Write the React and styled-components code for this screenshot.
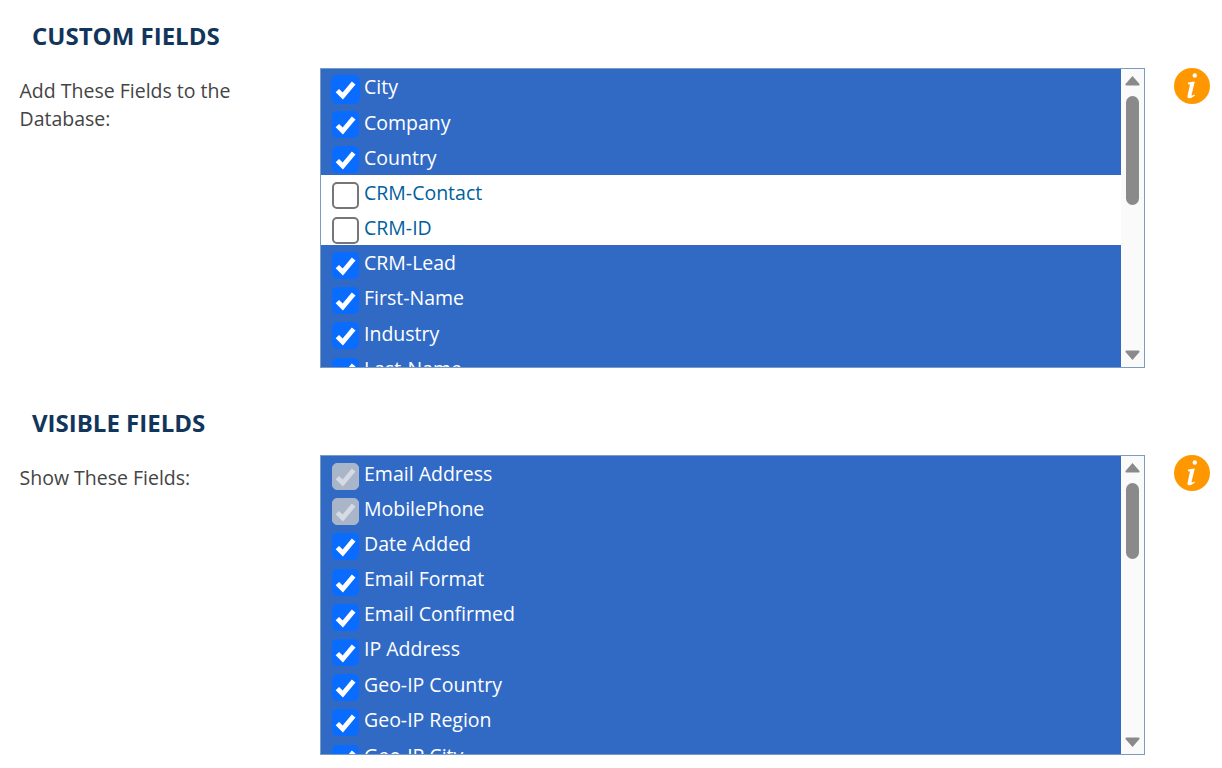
import React from 'react';
import styled, { createGlobalStyle } from 'styled-components';

const Global = createGlobalStyle`
  html, body { margin: 0; padding: 0; background: #fff; }
  body { font-family: "Open Sans", "Liberation Sans", sans-serif; overflow: hidden; }
`;
const Page = styled.div`
  width: 1222px;
  height: 768px;
  overflow: hidden;
  display: flex;
  flex-direction: column;
`;
const Section = styled.section`
  display: flex;
  flex-direction: column;
`;
const Title = styled.h2`
  margin: 0;
  height: ${p => p.$h}px;
  padding: ${p => p.$top}px 0 0 32px;
  box-sizing: border-box;
  font-size: 24px;
  line-height: 31px;
  font-weight: 700;
  color: #12355b;
`;
const Row = styled.div`
  display: flex;
  align-items: flex-start;
`;
const Label = styled.div`
  width: 320px;
  box-sizing: border-box;
  padding: 9px 60px 0 19.5px;
  font-size: 19.5px;
  line-height: 28px;
  color: #444;
`;
const ListBox = styled.div`
  width: 825px;
  height: 300px;
  box-sizing: border-box;
  border: 1px solid #7a9cc0;
  display: flex;
  background: #fff;
`;
const Items = styled.ul`
  flex: 1;
  margin: 0;
  padding: 0;
  list-style: none;
  overflow: hidden;
`;
const Item = styled.li`
  height: 35.2px;
  display: flex;
  align-items: flex-start;
  padding-left: 11px;
  background: ${p => (p.$on ? '#316ac5' : '#fff')};
  color: ${p => (p.$on ? '#fff' : '#005f9e')};
  font-size: 19.5px;
  line-height: 35px;
`;
const Box = styled.span`
  flex: none;
  width: 27px;
  height: 27px;
  margin-top: 7px;
  margin-right: 5px;
  box-sizing: border-box;
  border-radius: 5px;
  display: flex;
  align-items: center;
  justify-content: center;
  background: ${p => (p.$disabled ? '#a9b5c9' : p.$on ? '#0a6cff' : '#fff')};
  border: ${p => (p.$on ? 1 : 2)}px solid ${p => (p.$disabled ? '#a9b5c9' : p.$on ? '#0a6cff' : '#767676')};
  outline: ${p => (p.$focus ? '1px solid #0a6cff' : 'none')};
`;
const ItemText = styled.span`
  position: relative;
  top: ${p => p.$nudge}px;
`;
const Track = styled.div`
  flex: none;
  width: 23px;
  background: #fafafa;
  display: flex;
  flex-direction: column;
  align-items: center;
`;
const Arrow = styled.svg`
  flex: none;
  display: block;
  width: 15px;
  height: 11px;
  margin: ${p => (p.$down ? 'auto 0 6px' : '6px 0 0')};
`;
const Thumb = styled.div`
  width: 13px;
  height: ${p => p.$h}px;
  margin-top: 10px;
  border-radius: 7px;
  background: #8a8a8a;
`;
const InfoIcon = styled.svg`
  flex: none;
  width: 36px;
  height: 36px;
  margin-left: 29px;
  display: block;
`;

const Check = ({ light }) => (
  <svg width="25" height="25" viewBox="0 0 23 23">
    <path d="M4 12.5 L9 17.5 L19 5.5" fill="none" stroke={light ? '#d6dae2' : '#fff'} strokeWidth="4.4" strokeLinejoin="miter" />
  </svg>
);
const Info = () => (
  <InfoIcon viewBox="0 0 36 36">
    <circle cx="18" cy="18" r="18" fill="#ff9800" />
    <circle cx="20.8" cy="7.5" r="2.2" fill="#fff" />
    <path d="M14 14.6 L20.8 13.4 L17.5 27 Q17.4 28.4 20.4 26.6 L21 27.6 Q17 30.8 14.4 30.2 Q13 29.7 13.6 27.4 L16 16.6 L14 16.2 Z" fill="#fff" />
  </InfoIcon>
);
const Scrollbar = ({ thumb }) => (
  <Track>
    <Arrow viewBox="0 0 15 11"><path d="M7.5 1 L14.5 9 Q15 10.5 13.5 10.5 L1.5 10.5 Q0 10.5 .5 9 Z" fill="#8a8a8a" /></Arrow>
    <Thumb $h={thumb} />
    <Arrow $down viewBox="0 0 15 11"><path d="M7.5 10 L14.5 2 Q15 .5 13.5 .5 L1.5 .5 Q0 .5 .5 2 Z" fill="#8a8a8a" /></Arrow>
  </Track>
);
const Field = ({ name, on = true, disabled, focus, nudge = 0 }) => (
  <Item $on={on}>
    <Box $on={on} $disabled={disabled} $focus={focus}>{on && <Check light={disabled} />}</Box>
    <ItemText $nudge={nudge}>{name}</ItemText>
  </Item>
);

const custom = [
  ['City', true, 0], ['Company', true, 0.6], ['Country', true, 0.6], ['CRM-Contact', false, 0], ['CRM-ID', false, 0],
  ['CRM-Lead', true, 0], ['First-Name', true, 0], ['Industry', true, 0.6], ['Last-Name', true, 0.6],
];
const visible = [
  ['Date Added', 0], ['Email Format', -0.6], ['Email Confirmed', -0.6], ['IP Address', -0.6],
  ['Geo-IP Country', -0.6], ['Geo-IP Region', 0], ['Geo-IP City', 0],
];

export default function App() {
  return (
    <Page>
      <Global />
      <Section>
        <Title $h={68} $top={20}>CUSTOM FIELDS</Title>
        <Row>
          <Label>Add These Fields to the Database:</Label>
          <ListBox>
            <Items>
              {custom.map(([n, on, nudge], i) => <Field key={n} name={n} on={on} nudge={nudge} focus={i === 0} />)}
            </Items>
            <Scrollbar thumb={109} />
          </ListBox>
          <Info />
        </Row>
      </Section>
      <Section>
        <Title $h={87} $top={39}>VISIBLE FIELDS</Title>
        <Row>
          <Label>Show These Fields:</Label>
          <ListBox>
            <Items>
              <Field name="Email Address" disabled />
              <Field name="MobilePhone" disabled />
              {visible.map(([n, nudge]) => <Field key={n} name={n} nudge={nudge} />)}
            </Items>
            <Scrollbar thumb={76} />
          </ListBox>
          <Info />
        </Row>
      </Section>
    </Page>
  );
}
